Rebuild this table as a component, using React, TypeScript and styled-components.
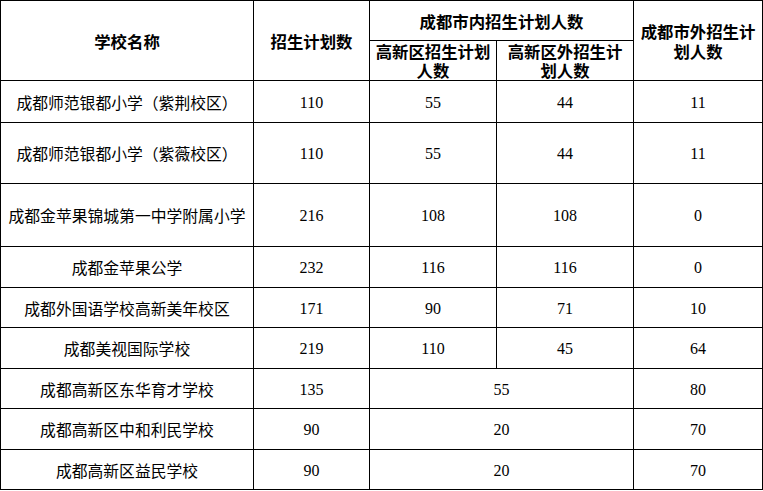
import React from "react";
import styled, { createGlobalStyle } from "styled-components";

const Global = createGlobalStyle`
  html, body {
    margin: 0;
    padding: 0;
    background: #ffffff;
  }
  body {
    font-family: "Liberation Serif", "Noto Sans CJK SC", serif;
    color: #000;
  }
`;

const Table = styled.table`
  border-collapse: collapse;
  table-layout: fixed;
  width: 762px;
  font-family: "Liberation Serif", "Noto Sans CJK SC", serif;
  color: #000;
`;

const Row = styled.tr<{ $h: number }>`
  height: ${(p) => p.$h}px;
`;

const HeadCell = styled.th<{ $lh?: number }>`
  border: 1px solid #000;
  padding: 0 4px;
  font-family: "Noto Sans CJK SC", sans-serif;
  font-weight: 700;
  font-size: 16.4px;
  line-height: ${(p) => p.$lh ?? 20}px;
  text-align: center;
  vertical-align: middle;
  white-space: nowrap;
`;

const Cell = styled.td`
  border: 1px solid #000;
  padding: 2px 4px 0;
  font-size: 16px;
  line-height: 20px;
  text-align: center;
  vertical-align: middle;
  white-space: nowrap;
`;

const NameCell = styled(Cell)`
  font-family: "Noto Sans CJK SC", sans-serif;
  font-size: 15.8px;
  font-weight: 400;
`;

type Item = {
  name: string;
  plan: number;
  inZone?: number;
  outZone?: number;
  merged?: number;
  outside: number;
  h: number;
};

const rows: Item[] = [
  { name: "成都师范银都小学（紫荆校区）", plan: 110, inZone: 55, outZone: 44, outside: 11, h: 42 },
  { name: "成都师范银都小学（紫薇校区）", plan: 110, inZone: 55, outZone: 44, outside: 11, h: 61 },
  { name: "成都金苹果锦城第一中学附属小学", plan: 216, inZone: 108, outZone: 108, outside: 0, h: 63 },
  { name: "成都金苹果公学", plan: 232, inZone: 116, outZone: 116, outside: 0, h: 41 },
  { name: "成都外国语学校高新美年校区", plan: 171, inZone: 90, outZone: 71, outside: 10, h: 40 },
  { name: "成都美视国际学校", plan: 219, inZone: 110, outZone: 45, outside: 64, h: 41 },
  { name: "成都高新区东华育才学校", plan: 135, merged: 55, outside: 80, h: 40 },
  { name: "成都高新区中和利民学校", plan: 90, merged: 20, outside: 70, h: 41 },
  { name: "成都高新区益民学校", plan: 90, merged: 20, outside: 70, h: 40 },
];

export default function App() {
  return (
    <>
      <Global />
      <Table>
        <colgroup>
          <col style={{ width: 253 }} />
          <col style={{ width: 116 }} />
          <col style={{ width: 127 }} />
          <col style={{ width: 137 }} />
          <col style={{ width: 129 }} />
        </colgroup>
        <thead>
          <Row $h={40}>
            <HeadCell rowSpan={2}>学校名称</HeadCell>
            <HeadCell rowSpan={2}>招生计划数</HeadCell>
            <HeadCell colSpan={2}>成都市内招生计划人数</HeadCell>
            <HeadCell rowSpan={2}>
              成都市外招生计
              <br />
              划人数
            </HeadCell>
          </Row>
          <Row $h={40}>
            <HeadCell $lh={19}>
              高新区招生计划
              <br />
              人数
            </HeadCell>
            <HeadCell $lh={19}>
              高新区外招生计
              <br />
              划人数
            </HeadCell>
          </Row>
        </thead>
        <tbody>
          {rows.map((r) => (
            <Row key={r.name} $h={r.h}>
              <NameCell>{r.name}</NameCell>
              <Cell>{r.plan}</Cell>
              {r.merged !== undefined ? (
                <Cell colSpan={2}>{r.merged}</Cell>
              ) : (
                <>
                  <Cell>{r.inZone}</Cell>
                  <Cell>{r.outZone}</Cell>
                </>
              )}
              <Cell>{r.outside}</Cell>
            </Row>
          ))}
        </tbody>
      </Table>
    </>
  );
}
